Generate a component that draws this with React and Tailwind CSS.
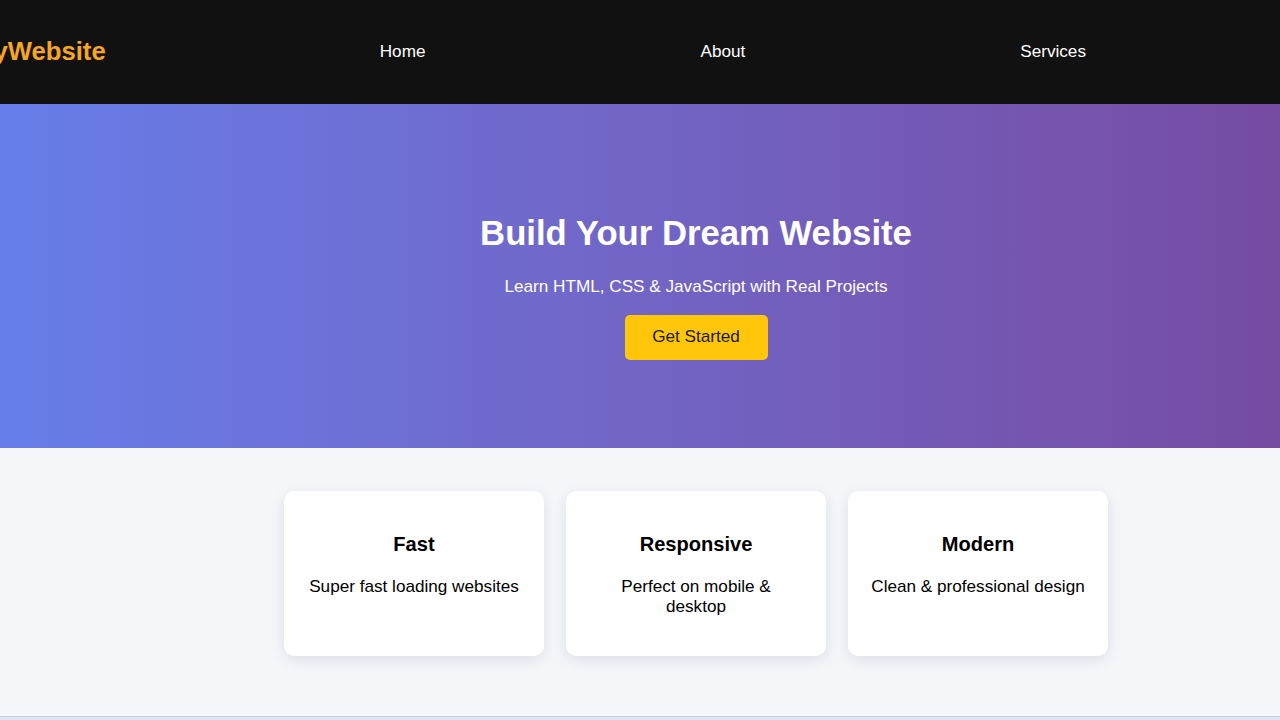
import React from 'react';

const links = ['Home', 'About', 'Services'];

const features = [
  { title: 'Fast', text: 'Super fast loading websites' },
  { title: 'Responsive', text: ['Perfect on mobile &', 'desktop'] },
  { title: 'Modern', text: 'Clean & professional design' },
];

export default function App() {
  return (
    <div className="w-[1280px] h-[720px] overflow-hidden bg-[#f4f6fa] font-['Liberation_Sans',Arial,sans-serif]">
      {/* Header */}
      <header className="h-[104px] bg-[#111111] flex items-center">
        <nav className="flex items-center gap-[274px] -ml-[28px]">
          <h2 className="text-[25.7px] font-bold text-[#f5a623] leading-none whitespace-nowrap">
            MyWebsite
          </h2>
          <ul className="flex items-center gap-[275px]">
            {links.map((l) => (
              <li key={l}>
                <a href="#" className="text-[17.15px] text-white whitespace-nowrap">
                  {l}
                </a>
              </li>
            ))}
          </ul>
        </nav>
      </header>

      {/* Hero */}
      <section className="h-[344px] bg-gradient-to-r from-[#667eea] to-[#764ba2] flex flex-col items-center pt-[110px] pl-[112px] text-white">
        <h1 className="text-[34.7px] font-bold leading-[1.15]">Build Your Dream Website</h1>
        <p className="text-[17.15px] leading-[1.15] mt-[23px]">
          Learn HTML, CSS &amp; JavaScript with Real Projects
        </p>
        <button className="mt-[18px] w-[143px] h-[45px] bg-[#ffc60a] text-[#1a1a1a] text-[17.15px] rounded-[5px]">
          Get Started
        </button>
      </section>

      {/* Features */}
      <section className="h-[268px] pt-[43px] pl-[112px] flex justify-center items-start">
        <div className="flex items-stretch gap-[22px]">
          {features.map((f) => (
            <div
              key={f.title}
              className="w-[260px] bg-white rounded-[10px] shadow-[0_4px_14px_rgba(20,30,60,0.10)] pt-[42px] pb-[39px] px-[20px] text-center text-black"
            >
              <h3 className="text-[20.07px] font-bold leading-[1.15]">{f.title}</h3>
              <p className="text-[17.15px] leading-[1.18] mt-[20px]">
                {Array.isArray(f.text) ? (
                  <>
                    {f.text[0]}
                    <br />
                    {f.text[1]}
                  </>
                ) : (
                  f.text
                )}
              </p>
            </div>
          ))}
        </div>
      </section>

      {/* Next section edge */}
      <div className="h-[4px] border-t border-[#c5cce0] bg-[#dfe5f5]" />
    </div>
  );
}
